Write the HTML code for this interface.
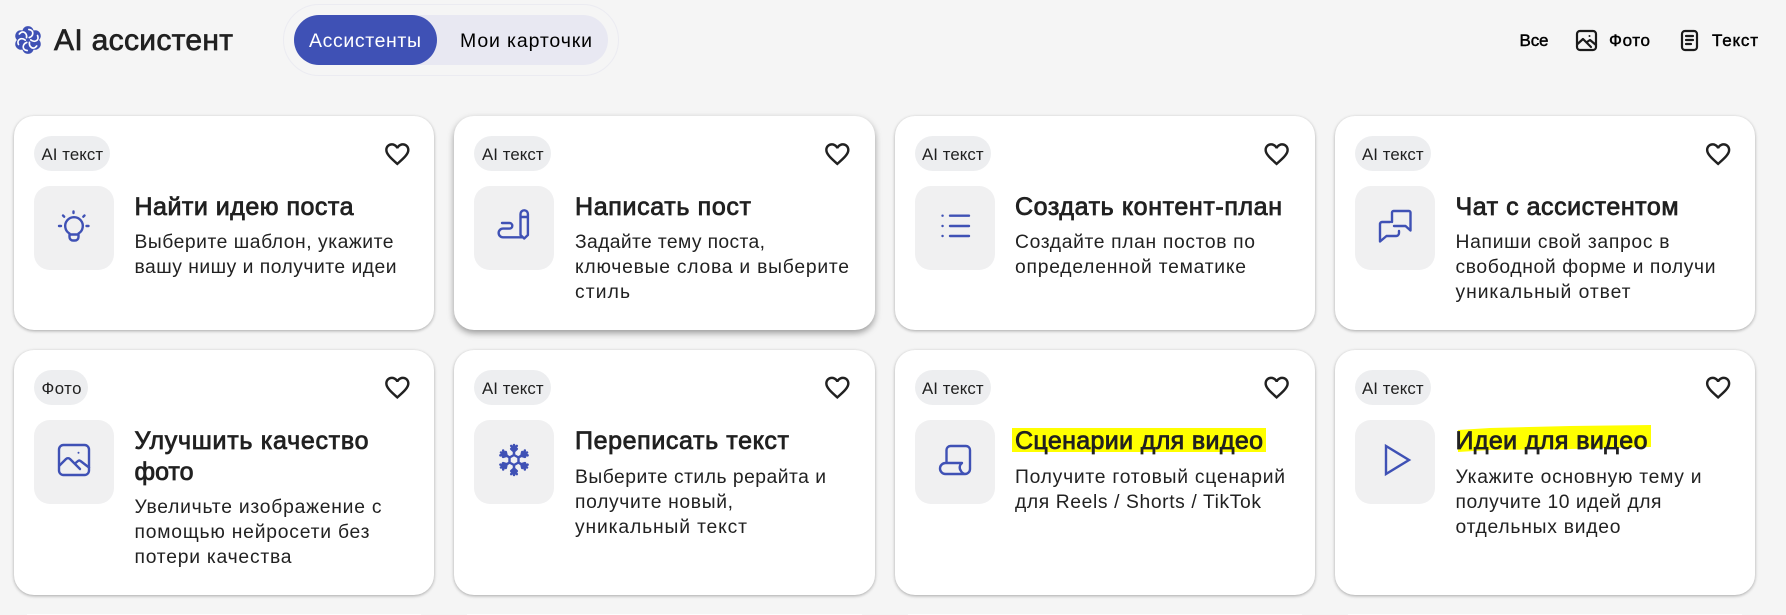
<!DOCTYPE html>
<html lang="ru">
<head>
<meta charset="utf-8">
<title>AI ассистент</title>
<style>
html,body{margin:0;padding:0;width:1786px;height:615px;overflow:hidden;background:#f5f5f5}
#root{position:relative;width:1786px;height:615px;overflow:hidden;background:#f5f5f5}
.a{position:absolute;box-sizing:border-box}
.card{background:#fff;border-radius:20px;box-shadow:0 1px 3px rgba(0,0,0,.32)}
.hov{box-shadow:0 3px 7px rgba(0,0,0,.38)}
.line{background:#fdfdfd;height:1px;top:614px}
.box{background:#f0f0f1;border-radius:16px;width:80px;height:84px}
.tag{background:#edeef0;border-radius:18px;height:35px}
svg.o{position:absolute;left:0;top:0}
text{font-family:"Liberation Sans","Noto Sans CJK SC",sans-serif;fill:#212121}
.h{font-size:25px;stroke:#212121;stroke-width:.8px}
.d{font-size:19.300px}
.t{font-size:16.800px}
.r{font-size:17px;fill:#000;stroke:#000;stroke-width:.45px}
.i{fill:none;stroke:#3f51b5;stroke-width:2.4;stroke-linecap:round;stroke-linejoin:round}
.k{fill:none;stroke:#1a1a1a;stroke-width:2.2;stroke-linecap:round;stroke-linejoin:round}
</style>
</head>
<body>
<div id="root">
<!-- header -->
<div class="a" style="left:283px;top:4px;width:336px;height:72px;border:1px solid #ebebf1;border-radius:36px"></div>
<div class="a" style="left:294px;top:15px;width:314px;height:50px;background:#e8e8f2;border-radius:25px"></div>
<div class="a" style="left:294px;top:15px;width:143px;height:50px;background:#3f51b5;border-radius:25px"></div>

<!-- row 1 -->
<div class="a card" style="left:14px;top:116px;width:420px;height:214px"></div>
<div class="a card hov" style="left:454px;top:116px;width:421px;height:214px"></div>
<div class="a card" style="left:895px;top:116px;width:420px;height:214px"></div>
<div class="a card" style="left:1335px;top:116px;width:420px;height:214px"></div>
<!-- row 2 -->
<div class="a card" style="left:14px;top:350px;width:420px;height:245px"></div>
<div class="a card" style="left:454px;top:350px;width:421px;height:245px"></div>
<div class="a card" style="left:895px;top:350px;width:420px;height:245px"></div>
<div class="a card" style="left:1335px;top:350px;width:420px;height:245px"></div>
<!-- row 3 top edge -->
<div class="a line" style="left:27px;width:394px"></div>
<div class="a line" style="left:467px;width:395px"></div>
<div class="a line" style="left:908px;width:394px"></div>
<div class="a line" style="left:1348px;width:394px"></div>

<!-- icon tiles -->
<div class="a box" style="left:34px;top:186px"></div>
<div class="a box" style="left:474px;top:186px"></div>
<div class="a box" style="left:915px;top:186px"></div>
<div class="a box" style="left:1355px;top:186px"></div>
<div class="a box" style="left:34px;top:420px"></div>
<div class="a box" style="left:474px;top:420px"></div>
<div class="a box" style="left:915px;top:420px"></div>
<div class="a box" style="left:1355px;top:420px"></div>
<!-- tags -->
<div class="a tag" style="left:34px;top:136px;width:76px"></div>
<div class="a tag" style="left:474px;top:136px;width:77px"></div>
<div class="a tag" style="left:915px;top:136px;width:76px"></div>
<div class="a tag" style="left:1355px;top:136px;width:76px"></div>
<div class="a tag" style="left:34px;top:370px;width:54px"></div>
<div class="a tag" style="left:474px;top:370px;width:77px"></div>
<div class="a tag" style="left:915px;top:370px;width:76px"></div>
<div class="a tag" style="left:1355px;top:370px;width:76px"></div>

<svg class="o" width="1786" height="615" viewBox="0 0 1786 615" xmlns="http://www.w3.org/2000/svg">
<defs>
<path id="heart" d="M16.5 3c-1.74 0-3.41.81-4.5 2.09C10.91 3.81 9.24 3 7.5 3 4.42 3 2 5.42 2 8.5c0 3.78 3.4 6.86 8.55 11.54L12 21.35l1.45-1.32C18.6 15.36 22 12.28 22 8.5 22 5.42 19.58 3 16.5 3zm-4.4 15.55l-.1.1-.1-.1C7.14 14.24 4 11.39 4 8.5 4 6.5 5.5 5 7.5 5c1.54 0 3.04.99 3.57 2.36h1.87C13.46 5.99 14.96 5 16.5 5c2 0 3.5 1.5 3.5 3.5 0 2.89-3.14 5.74-7.9 10.05z" fill="#212121"/>
<g id="lobe"><circle cx="0" cy="-7.800" r="5.400" fill="#3f51b5"/></g>
<path id="swirl" d="M1.200 -2.300C5.500 -4 6 -9.500 .8 -10" fill="none" stroke="#fff" stroke-width="1.600" stroke-linecap="round"/>
<g id="arm"><path d="M16 11V1M16 4.500l-2.800-2.600M16 4.500l2.800-2.600M16 7.500l-2.800-2.600M16 7.500l2.800-2.600" fill="none" stroke="#3f51b5" stroke-width="2.500" stroke-linecap="round"/></g>
</defs>

<!-- logo -->
<g transform="translate(28,40) scale(1.050)">
<use href="#lobe"/>
<use href="#lobe" transform="rotate(60)"/>
<use href="#lobe" transform="rotate(120)"/>
<use href="#lobe" transform="rotate(180)"/>
<use href="#lobe" transform="rotate(240)"/>
<use href="#lobe" transform="rotate(300)"/>
<circle r="5" fill="#3f51b5"/>
<use href="#swirl"/>
<use href="#swirl" transform="rotate(60)"/>
<use href="#swirl" transform="rotate(120)"/>
<use href="#swirl" transform="rotate(180)"/>
<use href="#swirl" transform="rotate(240)"/>
<use href="#swirl" transform="rotate(300)"/>
</g>
<text x="54" y="50" font-size="30" textLength="179" style="stroke:#212121;stroke-width:.7px">AI ассистент</text>

<text x="309" y="47" font-size="19.500" textLength="112" style="fill:#fff">Ассистенты</text>
<text x="460" y="47" font-size="19.500" textLength="132" style="fill:#000">Мои карточки</text>

<!-- filter -->
<text class="r" x="1519.500" y="46" textLength="29">Все</text>
<g transform="translate(1576,30)">
<rect x="1" y="1" width="19" height="19" rx="3" class="k"/>
<path class="k" stroke-width="1.6" d="M1.500 14L7 9l8 8M11 12l3-2 6 5"/>
<circle cx="13.500" cy="6" r="1" fill="#1a1a1a"/>
</g>
<text class="r" x="1609" y="46" textLength="41">Фото</text>
<g transform="translate(1681,30)">
<rect x="1" y="1" width="15" height="19" rx="3" class="k"/>
<path class="k" d="M5 6h7M5 10h7M5 14h5"/>
</g>
<text class="r" x="1712" y="46" textLength="46">Текст</text>

<!-- highlights -->
<rect x="1012" y="428" width="254" height="24" fill="#ffff00"/>
<path d="M1458 430L1490 428 1570 426 1651 425 1651 447 1570 449 1490 450 1458 452Z" fill="#ffff00"/>

<!-- tag text -->
<text class="t" x="41.500" y="160" textLength="61.500">AI текст</text>
<text class="t" x="482" y="160" textLength="61.500">AI текст</text>
<text class="t" x="922" y="160" textLength="61.500">AI текст</text>
<text class="t" x="1362" y="160" textLength="61.500">AI текст</text>
<text class="t" x="41.500" y="394" textLength="40">Фото</text>
<text class="t" x="482" y="394" textLength="61.500">AI текст</text>
<text class="t" x="922" y="394" textLength="61.500">AI текст</text>
<text class="t" x="1362" y="394" textLength="61.500">AI текст</text>

<!-- hearts -->
<use href="#heart" transform="translate(382.700,139.500) scale(1.22)"/>
<use href="#heart" transform="translate(822.700,139.500) scale(1.22)"/>
<use href="#heart" transform="translate(1262,139.500) scale(1.22)"/>
<use href="#heart" transform="translate(1703.500,139.500) scale(1.22)"/>
<use href="#heart" transform="translate(382.700,373) scale(1.22)"/>
<use href="#heart" transform="translate(822.700,373) scale(1.22)"/>
<use href="#heart" transform="translate(1262,373) scale(1.22)"/>
<use href="#heart" transform="translate(1703.500,373) scale(1.22)"/>

<!-- card 1 -->
<g transform="translate(58,210)">
<path class="i" d="M11.500 23.500A8.800 8.800 0 1 1 20.500 23.500V27a3.500 3.500 0 0 1-3.500 3.500h-2A3.500 3.500 0 0 1 11.500 27ZM11.500 24.500h9"/>
<path class="i" d="M15.500 1.500v1.500M5 5.500l1.200 1.200M26.500 5.500l-1.200 1.200M1 16h2M28.500 16h2"/>
</g>
<text class="h" x="134.500" y="215" textLength="219">Найти идею поста</text>
<text class="d" x="134.500" y="248" textLength="259">Выберите шаблон, укажите</text>
<text class="d" x="134.500" y="273" textLength="262">вашу нишу и получите идеи</text>

<!-- card 2 -->
<g transform="translate(498,210)">
<path class="i" d="M4 13H11.500a2.800 2.800 0 0 1 0 5.600H5a4.300 4.300 0 0 0 0 8.700H24"/>
<path class="i" d="M22.500 25V4a3.700 3.700 0 0 1 7.400 0V25l-3.700 3.500ZM22.500 7h7.400"/>
</g>
<text class="h" x="575" y="215" textLength="176">Написать пост</text>
<text class="d" x="575" y="248" textLength="190">Задайте тему поста,</text>
<text class="d" x="575" y="273" textLength="274">ключевые слова и выберите</text>
<text class="d" x="575" y="298" textLength="55">стиль</text>

<!-- card 3 -->
<g transform="translate(939,210)">
<path class="i" d="M11 5.700H30M11 16H30M11 26H30"/>
<path class="i" stroke-width="1.600" d="M3.500 5.700h.1M3.500 16h.1M3.500 26h.1"/>
</g>
<text class="h" x="1015" y="215" textLength="267">Создать контент-план</text>
<text class="d" x="1015" y="248" textLength="240">Создайте план постов по</text>
<text class="d" x="1015" y="273" textLength="231">определенной тематике</text>

<!-- card 4 -->
<g transform="translate(1379,210)">
<path class="i" d="M13 12V2.500a1.500 1.500 0 0 1 1.500-1.500H30a1.500 1.500 0 0 1 1.500 1.500V20.500L26.500 16H15"/>
<path class="i" d="M11 12H3a2 2 0 0 0-2 2V31.500L7.500 26H17a3 3 0 0 0 3-3V21"/>
</g>
<text class="h" x="1455.500" y="215" textLength="223">Чат с ассистентом</text>
<text class="d" x="1455.500" y="248" textLength="214">Напиши свой запрос в</text>
<text class="d" x="1455.500" y="273" textLength="260">свободной форме и получи</text>
<text class="d" x="1455.500" y="298" textLength="175">уникальный ответ</text>

<!-- card 5 -->
<g transform="translate(58,444)">
<rect x="1" y="1" width="30" height="30" rx="4.500" class="i"/>
<path class="i" d="M1.500 21.500L8 15a3 3 0 0 1 4 0L22 25M17 19.500l3-2.500a2 2 0 0 1 2.500 0L31 23.500"/>
<circle cx="20.500" cy="8.700" r="1" fill="#3f51b5"/>
</g>
<text class="h" x="134.500" y="449" textLength="234">Улучшить качество</text>
<text class="h" x="134.500" y="480" textLength="59">фото</text>
<text class="d" x="134.500" y="513" textLength="247">Увеличьте изображение с</text>
<text class="d" x="134.500" y="538" textLength="235">помощью нейросети без</text>
<text class="d" x="134.500" y="563" textLength="157">потери качества</text>

<!-- card 6 -->
<g transform="translate(498,444)">
<path class="i" stroke-width="2.400" d="M16 11L20.500 13.500V18.500L16 21L11.500 18.500V13.500Z"/>
<use href="#arm"/>
<use href="#arm" transform="rotate(60 16 16)"/>
<use href="#arm" transform="rotate(120 16 16)"/>
<use href="#arm" transform="rotate(180 16 16)"/>
<use href="#arm" transform="rotate(240 16 16)"/>
<use href="#arm" transform="rotate(300 16 16)"/>
</g>
<text class="h" x="575" y="449" textLength="214">Переписать текст</text>
<text class="d" x="575" y="483" textLength="251">Выберите стиль рерайта и</text>
<text class="d" x="575" y="508" textLength="158">получите новый,</text>
<text class="d" x="575" y="533" textLength="172">уникальный текст</text>

<!-- card 7 -->
<g transform="translate(939,444)">
<path class="i" d="M7.500 19V6a4 4 0 0 1 4-4H27a4 4 0 0 1 4 4V25a5 5 0 0 1-5 5H6.500a5.500 5.500 0 0 1 0-11H23a5.500 5.500 0 0 0-1 8c.5 1 1.500 2.500 4 3"/>
</g>
<text class="h" x="1015" y="449" textLength="248">Сценарии для видео</text>
<text class="d" x="1015" y="483" textLength="270">Получите готовый сценарий</text>
<text class="d" x="1015" y="508" textLength="246">для Reels / Shorts / TikTok</text>

<!-- card 8 -->
<g transform="translate(1379,444)">
<path d="M7 2V30L30 16Z" fill="none" stroke="#3f51b5" stroke-width="2.400" stroke-linejoin="miter"/>
</g>
<text class="h" x="1455.500" y="449" textLength="192">Идеи для видео</text>
<text class="d" x="1455.500" y="483" textLength="246">Укажите основную тему и</text>
<text class="d" x="1455.500" y="508" textLength="206">получите 10 идей для</text>
<text class="d" x="1455.500" y="533" textLength="165">отдельных видео</text>
</svg>
</div>
</body>
</html>
